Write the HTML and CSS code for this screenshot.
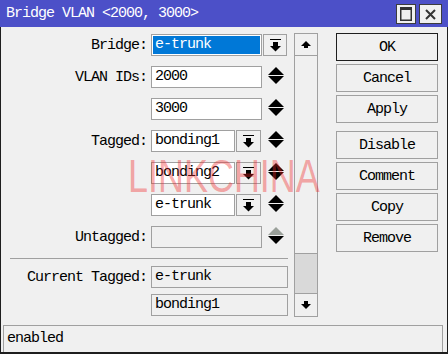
FILE: index.html
```html
<!DOCTYPE html>
<html>
<head>
<meta charset="utf-8">
<link rel="stylesheet" href="styles.css">
</head>
<body>
<div class="window">
  <div class="titlebar">
    <span class="title">Bridge VLAN &lt;2000, 3000&gt;</span>
    <div class="tbtns">
      <span class="tbtn max"><svg width="12" height="14" viewBox="0 0 12 14"><rect x="0.75" y="0.75" width="10.5" height="12.5" fill="none" stroke="#333" stroke-width="1.5"/><rect x="0" y="0" width="12" height="3" fill="#333"/></svg></span>
      <span class="tbtn close"><svg width="11" height="11" viewBox="0 0 11 11"><path d="M1 1L10 10M10 1L1 10" stroke="#333" stroke-width="2"/></svg></span>
    </div>
  </div>
  <div class="frame">
    <div class="content">
      <div class="form">
        <div class="row">
          <span class="label">Bridge:</span>
          <span class="field sel w111">e-trunk</span>
          <span class="dd w24"><svg width="11" height="13" viewBox="0 0 11 13"><rect x="0" y="0" width="11" height="1" fill="#000"/><rect x="3" y="3" width="5" height="4" fill="#000"/><polygon points="0,7 11,7 5.5,12.5" fill="#000"/></svg></span>
        </div>
        <div class="row">
          <span class="label">VLAN IDs:</span>
          <span class="field w111">2000</span>
          <span class="spin s6"><svg width="16" height="17" viewBox="0 0 16 17"><polygon points="8,0 16,8 0,8" fill="#000"/><polygon points="0,9 16,9 8,17" fill="#000"/></svg></span>
        </div>
        <div class="row">
          <span class="label"></span>
          <span class="field w111">3000</span>
          <span class="spin s6"><svg width="16" height="17" viewBox="0 0 16 17"><polygon points="8,0 16,8 0,8" fill="#000"/><polygon points="0,9 16,9 8,17" fill="#000"/></svg></span>
        </div>
        <div class="row">
          <span class="label">Tagged:</span>
          <span class="field w84">bonding1</span>
          <span class="dd w25"><svg width="11" height="13" viewBox="0 0 11 13"><rect x="0" y="0" width="11" height="1" fill="#000"/><rect x="3" y="3" width="5" height="4" fill="#000"/><polygon points="0,7 11,7 5.5,12.5" fill="#000"/></svg></span>
          <span class="spin s7"><svg width="16" height="17" viewBox="0 0 16 17"><polygon points="8,0 16,8 0,8" fill="#000"/><polygon points="0,9 16,9 8,17" fill="#000"/></svg></span>
        </div>
        <div class="row">
          <span class="label"></span>
          <span class="field w84">bonding2</span>
          <span class="dd w25"><svg width="11" height="13" viewBox="0 0 11 13"><rect x="0" y="0" width="11" height="1" fill="#000"/><rect x="3" y="3" width="5" height="4" fill="#000"/><polygon points="0,7 11,7 5.5,12.5" fill="#000"/></svg></span>
          <span class="spin s7"><svg width="16" height="17" viewBox="0 0 16 17"><polygon points="8,0 16,8 0,8" fill="#000"/><polygon points="0,9 16,9 8,17" fill="#000"/></svg></span>
        </div>
        <div class="row">
          <span class="label"></span>
          <span class="field w84">e-trunk</span>
          <span class="dd w25"><svg width="11" height="13" viewBox="0 0 11 13"><rect x="0" y="0" width="11" height="1" fill="#000"/><rect x="3" y="3" width="5" height="4" fill="#000"/><polygon points="0,7 11,7 5.5,12.5" fill="#000"/></svg></span>
          <span class="spin s7"><svg width="16" height="17" viewBox="0 0 16 17"><polygon points="8,0 16,8 0,8" fill="#000"/><polygon points="0,9 16,9 8,17" fill="#000"/></svg></span>
        </div>
        <div class="row">
          <span class="label">Untagged:</span>
          <span class="field ro w111"></span>
          <span class="spin s6"><svg width="16" height="17" viewBox="0 0 16 17"><polygon points="8,0 16,8 0,8" fill="#9aa09a"/><polygon points="0,9 16,9 8,17" fill="#000"/></svg></span>
        </div>
        <div class="sep"></div>
        <div class="row tight">
          <span class="label">Current Tagged:</span>
          <span class="field ro w137">e-trunk</span>
        </div>
        <div class="row end">
          <span class="label"></span>
          <span class="field ro w137">bonding1</span>
        </div>
      </div>
      <div class="scroll">
        <div class="sbtn up"><svg width="10" height="8" viewBox="0 0 10 8"><polygon points="5,0 10,5 0,5" fill="#000"/><rect x="3" y="5" width="4" height="2" fill="#000"/></svg></div>
        <div class="track"></div>
        <div class="thumb"></div>
        <div class="sbtn down"><svg width="10" height="8" viewBox="0 0 10 8"><rect x="3" y="0" width="4" height="3" fill="#000"/><polygon points="0,3 10,3 5,8" fill="#000"/></svg></div>
      </div>
      <div class="buttons">
        <div class="btn ok">OK</div>
        <div class="btn">Cancel</div>
        <div class="btn group-end">Apply</div>
        <div class="btn">Disable</div>
        <div class="btn">Comment</div>
        <div class="btn">Copy</div>
        <div class="btn">Remove</div>
      </div>
    </div>
    <div class="status">enabled</div>
  </div>
  <div class="watermark">LINKCHINA</div>
</div>
</body>
</html>
```

FILE: styles.css
```css
html, body {
  margin: 0;
  padding: 0;
}
body {
  width: 448px;
  height: 354px;
  background: #f0f0f0;
  font-family: "Liberation Mono", "DejaVu Sans Mono", monospace;
  font-size: 15px;
  letter-spacing: -1px;
  color: #000;
  overflow: hidden;
}
.window {
  position: relative;
  width: 448px;
  height: 354px;
  display: flex;
  flex-direction: column;
  background: #f0f0f0;
}
.titlebar {
  height: 27px;
  flex: none;
  background: #4c50c8;
  color: #fff;
  display: flex;
  align-items: flex-start;
  padding: 0 6px;
}
.title {
  flex: 1;
  line-height: 27px;
  white-space: nowrap;
}
.tbtns {
  display: flex;
  gap: 3px;
  margin-top: 4px;
}
.tbtn {
  box-sizing: border-box;
  height: 20px;
  border: 1px solid #3c3c3c;
  background: #f0f0f0;
  display: flex;
  align-items: center;
  justify-content: center;
}
.tbtn.max { width: 20px; }
.tbtn.close { width: 23px; }
.frame {
  flex: 1;
  display: flex;
  flex-direction: column;
  border: 1px solid #1e1e1e;
  border-top: 0;
  border-bottom-width: 2px;
}
.content {
  height: 298px;
  display: flex;
  flex: none;
}
.form {
  width: 287px;
  padding-top: 7px;
  display: flex;
  flex-direction: column;
}
.row {
  display: flex;
  align-items: center;
  height: 22px;
  margin-bottom: 10px;
  white-space: nowrap;
  flex: none;
}
.row.tight { margin-bottom: 6px; }
.row.end { margin-bottom: 0; }
.label {
  width: 146px;
  text-align: right;
  margin-right: 4px;
  flex: none;
}
.field {
  box-sizing: border-box;
  height: 22px;
  line-height: 20px;
  border: 1px solid #a0a0a0;
  background: #fff;
  padding-left: 3px;
  overflow: hidden;
  flex: none;
}
.field.sel {
  background: #0078d7;
  color: #fff;
  box-shadow: inset 0 0 0 1px #fff;
}
.field.ro { background: #f0f0f0; }
.w111 { width: 111px; }
.w84 { width: 84px; }
.w137 { width: 137px; }
.dd {
  box-sizing: border-box;
  height: 22px;
  margin-left: 1px;
  border: 1px solid #a0a0a0;
  background: #f0f0f0;
  display: flex;
  align-items: center;
  justify-content: center;
  flex: none;
}
.dd.w24 { width: 24px; }
.dd.w25 { width: 25px; }
.spin {
  display: flex;
  width: 16px;
  height: 17px;
  margin-top: -3px;
  flex: none;
}
.spin.s6 { margin-left: 6px; }
.spin.s7 { margin-left: 7px; }
.sep {
  flex: none;
  height: 0;
  border-top: 1px solid #a0a0a0;
  margin: 0 0 7px 9px;
  width: 278px;
}
.scroll {
  box-sizing: border-box;
  width: 24px;
  height: 284px;
  margin: 6px 0 0 6px;
  border: 1px solid #a0a0a0;
  background: #f0f0f0;
  display: flex;
  flex-direction: column;
  flex: none;
}
.sbtn {
  display: flex;
  align-items: center;
  justify-content: center;
  background: #f0f0f0;
  flex: none;
}
.sbtn.up {
  height: 21px;
  border-bottom: 1px solid #a0a0a0;
}
.track { flex: 1; }
.thumb {
  box-sizing: border-box;
  flex: none;
  height: 40px;
  background: #d9d9d9;
  border-top: 1px solid #a0a0a0;
}
.sbtn.down {
  height: 22px;
  border-top: 1px solid #a0a0a0;
}
.buttons {
  width: 102px;
  margin: 6px 0 0 18px;
  display: flex;
  flex-direction: column;
  flex: none;
}
.btn {
  box-sizing: border-box;
  height: 28px;
  border: 1px solid #a0a0a0;
  background: #f0f0f0;
  display: flex;
  align-items: center;
  justify-content: center;
  margin-bottom: 3px;
  flex: none;
}
.btn.ok { border-color: #1e1e1e; }
.btn.group-end { margin-bottom: 8px; }
.status {
  box-sizing: border-box;
  height: 27px;
  margin: 0 4px 0 2px;
  border: 1px solid #a0a0a0;
  border-bottom: 0;
  padding-left: 3px;
  line-height: 26px;
  flex: none;
}
.watermark {
  position: absolute;
  left: 128px;
  top: 152px;
  font-family: "Liberation Sans", Arial, sans-serif;
  font-size: 47px;
  line-height: 1;
  letter-spacing: 0;
  color: rgba(240, 40, 40, 0.4);
  transform: scaleX(0.765);
  transform-origin: left top;
  pointer-events: none;
  white-space: nowrap;
}
```
